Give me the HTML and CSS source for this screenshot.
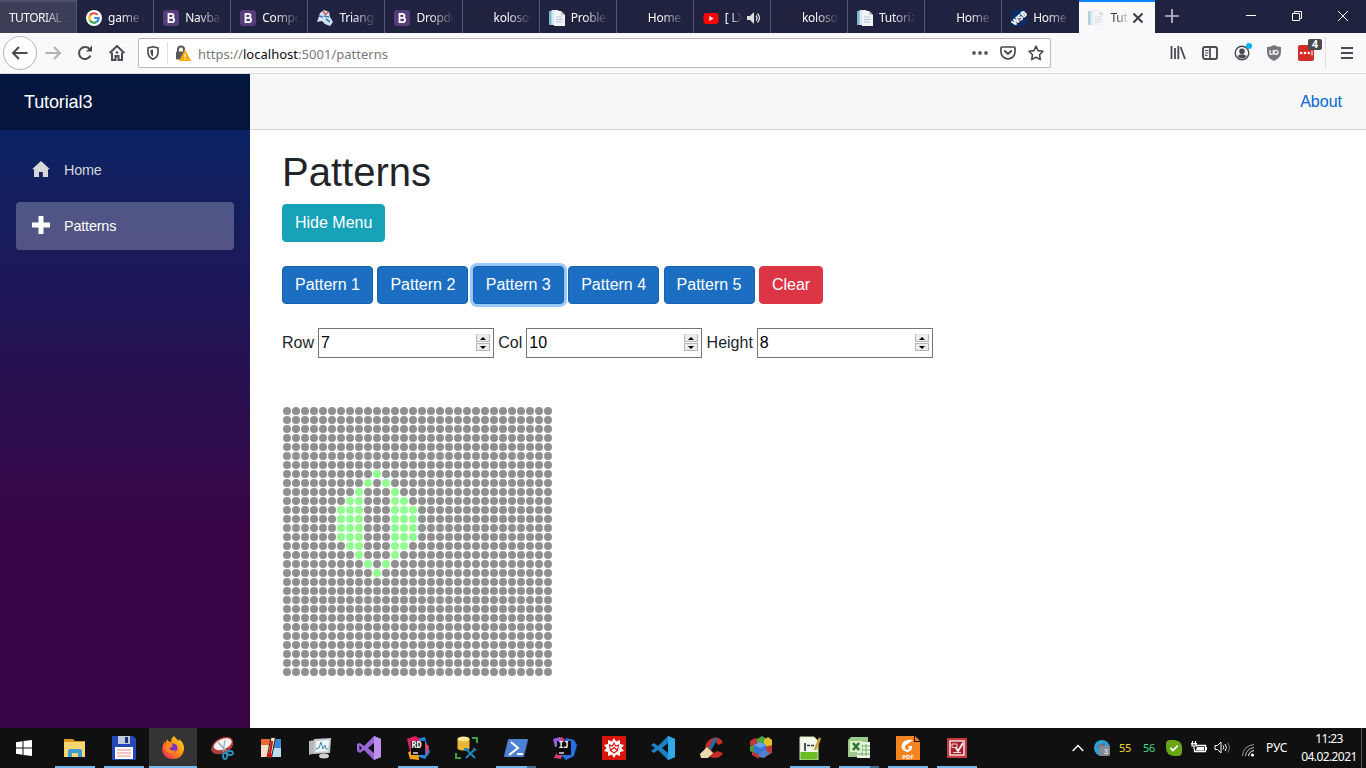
FILE: index.html
```html
<!DOCTYPE html>
<html lang="en">
<head>
<meta charset="utf-8">
<title>Tutorial3</title>
<link rel="stylesheet" href="styles.css">
</head>
<body>
<svg class="defs" width="0" height="0">
  <symbol id="boot" viewBox="0 0 16 16"><rect width="16" height="16" rx="3" fill="#563d7c"/><path d="M5.5 3.8h3a2 2 0 0 1 0 4h-3zM5.5 7.8h3.4a2.2 2.2 0 0 1 0 4.4H5.5z" fill="none" stroke="#fff" stroke-width="1.8"/></symbol>
  <symbol id="doc" viewBox="0 0 16 16"><path d="M0 1h4v14H0z" fill="#7fb6cf"/><path d="M2.5 0h7v15h-7z" fill="#d5e8ef"/><path d="M5 1h7l4 4v11H5z" fill="#f1f3f5"/><path d="M12 1v4h4z" fill="#b9c6ce"/><path d="M7 7h6M7 9.500h7M7 12h6" stroke="#b5c7d2"/></symbol>
  <symbol id="git" viewBox="0 0 16 16"><circle cx="8" cy="8" r="7" fill="#1f2139"/><path d="M5 13v-3Q3 9 4 5l2 1h4l2-1q1 4-1 5v3" fill="#22243f"/></symbol>
</svg>

<header class="tabs">
  <div class="tab hover"><span class="label wide">TUTORIAL 3</span></div>
  <div class="tab"><svg class="fav" viewBox="0 0 16 16"><circle cx="8" cy="8" r="8" fill="#fff"/><g fill="none" stroke-width="2.2"><path d="M4 5.500A4.700 4.700 0 0 1 11.400 4.700" stroke="#ea4335"/><path d="M4 5.500a4.700 4.700 0 0 0 0 5" stroke="#fbbc05"/><path d="M4 10.500a4.700 4.700 0 0 0 7 1.200" stroke="#34a853"/><path d="M11 11.700A4.700 4.700 0 0 0 12.600 8H8.200" stroke="#4285f4"/></g></svg><span class="label">game dev</span></div>
  <div class="tab"><svg class="fav"><use href="#boot"/></svg><span class="label">Navbar</span></div>
  <div class="tab"><svg class="fav"><use href="#boot"/></svg><span class="label">Components</span></div>
  <div class="tab"><svg class="fav" viewBox="0 0 16 16"><path d="M3 3l4-3 5 2 1 5 3 5-3 4-5-2-3-3-5 1 1-3z" fill="#cfe3f1"/><path d="M6 1l2 3M11 2l-3 3" stroke="#d55" stroke-width="1.500"/><path d="M2 6l4 1M9 9l4 3M7 6l5 1" stroke="#3f7fb5" stroke-width="1.600"/></svg><span class="label">Triangle</span></div>
  <div class="tab"><svg class="fav"><use href="#boot"/></svg><span class="label">Dropdowns</span></div>
  <div class="tab"><svg class="fav"><use href="#git"/></svg><span class="label">kolosovp</span></div>
  <div class="tab"><svg class="fav"><use href="#doc"/></svg><span class="label">Problems</span></div>
  <div class="tab"><svg class="fav" viewBox="0 0 16 16"><path d="M1 1h14" stroke="#1d2348"/></svg><span class="label">Home -</span></div>
  <div class="tab"><svg class="fav" viewBox="0 0 16 16"><rect y="3" x=".5" width="15" height="11" rx="3" fill="#f00"/><path d="M6.300 6v5l4.200-2.500z" fill="#fff"/></svg><span class="label short">[ LXST</span><svg class="sound" viewBox="0 0 14 14"><path d="M0 5h3l4-4v12L3 9H0z" fill="#ddd"/><path d="M9 4.500q2 2.500 0 5M10.500 2.500q4 4.500 0 9" fill="none" stroke="#ddd" stroke-width="1.300"/></svg></div>
  <div class="tab"><svg class="fav"><use href="#git"/></svg><span class="label">kolosovp</span></div>
  <div class="tab"><svg class="fav"><use href="#doc"/></svg><span class="label">Tutorials</span></div>
  <div class="tab"><svg class="fav" viewBox="0 0 16 16"><path d="M1 1h14" stroke="#1d2348"/></svg><span class="label">Home -</span></div>
  <div class="tab last"><svg class="fav" viewBox="0 0 16 16"><rect width="16" height="16" rx="2" fill="#0b2b66"/><text x="8" y="11" class="wsb" transform="rotate(-42 8 8)">WSB</text></svg><span class="label">Home -</span></div>
  <div class="tab active"><svg class="fav pale"><use href="#doc"/></svg><span class="label cut">Tutorial3</span><svg class="close" viewBox="0 0 12 12"><path d="M1.500 1.500l9 9M10.500 1.500l-9 9" stroke="#38383d" stroke-width="1.900"/></svg></div>
  <svg class="plus" viewBox="0 0 14 14"><path d="M7 0v14M0 7h14" stroke="#bfc0d0" stroke-width="1.700"/></svg>
  <div class="win">
    <svg viewBox="0 0 12 12"><path d="M1 5.500h10" stroke="#fff"/></svg>
    <svg viewBox="0 0 12 12"><path d="M1.500 3.500h7v7h-7zM3.500 3.500v-2h7v7h-2" fill="none" stroke="#fff"/></svg>
    <svg viewBox="0 0 12 12"><path d="M1 1l10 10M11 1L1 11" stroke="#fff"/></svg>
  </div>
</header>

<nav class="toolbar">
  <span class="back"><svg width="18" height="18" viewBox="0 0 18 18"><path d="M16.500 9H2M8 3L2 9l6 6" class="ln"/></svg></span>
  <svg class="fwd" width="18" height="18" viewBox="0 0 18 18"><path d="M1.500 9H16M10 3l6 6-6 6" class="ln"/></svg>
  <svg class="reload" width="16" height="16" viewBox="0 0 16 16"><path d="M13.500 10.500a6 6 0 1 1-.6-6" class="ln"/><path d="M15 .5v6H9z" fill="#4a4a4f"/></svg>
  <svg class="homeb" width="16" height="16" viewBox="0 0 16 16"><path d="M.7 8L8 1l7.300 7" class="ln"/><path d="M3 7.500V15h3.500v-4h3v4H13V7.500" class="ln"/><circle cx="8" cy="7.500" r="1.300" fill="#4a4a4f"/></svg>
  <div class="url">
    <svg class="shield" width="12" height="14" viewBox="0 0 12 14"><path d="M6 .8l5 1.200v4.500q0 4.500-5 6.700-5-2.200-5-6.700V2z" fill="none" stroke="#4a4a4f" stroke-width="1.600"/><path d="M6 3.500v7q-2.500-1.500-2.500-4V4z" fill="#4a4a4f"/></svg>
    <span class="sep"></span>
    <svg class="lock" width="16" height="16" viewBox="0 0 16 16"><path d="M3 7V4.500a3 3 0 0 1 6 0V7" fill="none" stroke="#5a5a5e" stroke-width="2"/><rect x="1" y="6.500" width="9" height="8" rx="1" fill="#5a5a5e"/><path d="M10 5.500l5.500 10H4.500z" fill="#ffa900" stroke="#ffa900" stroke-linejoin="round"/><path d="M10 9v3.200M10 13.400v1.300" stroke="#fff" stroke-width="1.300"/></svg>
    <span class="addr">https://<b>localhost</b>:5001/patterns</span>
    <svg class="dots3" width="16" height="4" viewBox="0 0 16 4"><g fill="#5a5a5e"><circle cx="2" cy="2" r="1.900"/><circle cx="8" cy="2" r="1.900"/><circle cx="14" cy="2" r="1.900"/></g></svg>
    <svg class="pocket" width="16" height="14" viewBox="0 0 16 14"><path d="M2 1h12q1 0 1 1v4a7 7 0 0 1-14 0V2q0-1 1-1z" fill="none" stroke="#4a4a4f" stroke-width="1.700"/><path d="M4.800 5L8 8l3.200-3" fill="none" stroke="#4a4a4f" stroke-width="1.900" stroke-linecap="round"/></svg>
    <svg class="star" width="16" height="16" viewBox="0 0 16 16"><path d="M8 1.200l2.100 4.400 4.900.7-3.500 3.400.8 4.900L8 12.300l-4.300 2.300.8-4.900L1 6.300l4.900-.7z" fill="none" stroke="#4a4a4f" stroke-width="1.600" stroke-linejoin="round"/></svg>
  </div>
  <div class="tools">
    <svg width="16" height="16" viewBox="0 0 16 16"><path d="M1.500 1v13M5 3v11M8.300 1v13M10.600 2l4.400 12" stroke="#4a4a4f" stroke-width="1.800"/></svg>
    <svg width="16" height="16" viewBox="0 0 16 16"><rect x="1" y="2" width="14" height="12" rx="2" fill="none" stroke="#4a4a4f" stroke-width="1.900"/><path d="M8 2v12" stroke="#4a4a4f" stroke-width="1.700"/><path d="M3 5.500h3.500M3 8h3.500M3 10.500h2.500" stroke="#4a4a4f"/></svg>
    <svg width="18" height="18" viewBox="0 0 18 18"><circle cx="8" cy="10" r="6.800" fill="none" stroke="#4a4a4f" stroke-width="1.400"/><circle cx="8" cy="8.300" r="2.800" fill="#4a4a4f"/><path d="M3.300 13q4.700-3.500 9.400 0-2 2.600-4.700 2.600T3.300 13z" fill="#4a4a4f"/><circle cx="15" cy="3" r="3" fill="#00b3f4"/></svg>
    <svg width="16" height="16" viewBox="0 0 16 16"><path d="M8 0q3 2 7 2v5q0 6-7 9-7-3-7-9V2q4 0 7-2z" fill="#77777b"/><path d="M4 5v3.500q1.700 2 3.300 0V5M7.300 5v4" fill="none" stroke="#fff" stroke-width="1.200"/><circle cx="10" cy="7.300" r="2" fill="none" stroke="#fff" stroke-width="1.200"/></svg>
    <span class="ext"><svg width="16" height="16" viewBox="0 0 16 16"><rect width="16" height="16" rx="2" fill="#d32d27"/><g fill="#fff"><circle cx="3.200" cy="8" r="1.300"/><circle cx="7" cy="8" r="1.300"/><circle cx="10.800" cy="8" r="1.300"/><path d="M13.500 5.500h1v5h-1z"/></g></svg><i class="badge">4</i></span>
    <span class="tsep"></span>
    <svg width="12" height="14" viewBox="0 0 12 14"><path d="M0 2h12M0 7h12M0 12h12" stroke="#4a4a4f" stroke-width="1.900"/></svg>
  </div>
</nav>

<div class="page">
  <aside class="sidebar">
    <div class="brand">Tutorial3</div>
    <a class="item"><svg width="18" height="18" viewBox="0 0 18 18"><path d="M9 1L0 9.300h2V17h5v-5h3.800v5H16V9.300h2z" fill="#d7d7d7"/></svg><span>Home</span></a>
    <a class="item on"><svg width="18" height="18" viewBox="0 0 18 18"><path d="M6.500 0h5v6.500H18v5h-6.500V18h-5v-6.500H0v-5h6.500z" fill="#fff"/></svg><span>Patterns</span></a>
  </aside>
  <main>
    <div class="top"><a>About</a></div>
    <div class="content">
      <h1>Patterns</h1>
      <div class="row"><button class="btn info">Hide Menu</button></div>
      <div class="row"><button class="btn">Pattern 1</button> <button class="btn">Pattern 2</button> <button class="btn focus">Pattern 3</button> <button class="btn">Pattern 4</button> <button class="btn">Pattern 5</button> <button class="btn danger">Clear</button></div>
      <div class="fields">
        <label>Row</label><span class="num"><input value="7"><i class="spin"><b></b><b></b></i></span>
        <label>Col</label><span class="num"><input value="10"><i class="spin"><b></b><b></b></i></span>
        <label>Height</label><span class="num"><input value="8"><i class="spin"><b></b><b></b></i></span>
      </div>
      <svg id="board" width="270" height="270"></svg>
    </div>
  </main>
</div>

<footer class="taskbar">
  <div class="app start"><svg width="16" height="16" viewBox="0 0 16 16"><path d="M0 2.300l6.500-1v6.200H0zM7.500 1.100L16 0v7.500H7.500zM0 8.500h6.500v6.200l-6.500-1zM7.500 8.500H16V16l-8.500-1.100z" fill="#fff"/></svg></div>
  <div class="app run"><svg viewBox="0 0 24 24"><path d="M1 3h9l2 2h10v3H1z" fill="#d99b1c"/><path d="M1 6h21v15H1z" fill="#f9d672"/><path d="M5 21v-6q0-2 2-2h10q2 0 2 2v6h-4v-4H9v4z" fill="#3f9bd4"/></svg></div>
  <div class="app run"><svg viewBox="0 0 24 24"><path d="M0 0h21l3 3v20q0 1-1 1H1q-1 0-1-1z" fill="#2448b8"/><path d="M6 0h12v8H6z" fill="#c4cbd8"/><path d="M13 1h3v6h-3z" fill="#1b327e"/><path d="M3 11h18v12H3z" fill="#fff"/><path d="M5 14h14M5 17h14M5 20h14" stroke="#e98b8b"/></svg></div>
  <div class="app cur"><svg viewBox="0 0 24 24"><defs><linearGradient id="fx" x1="1" y1="0" x2="0" y2="1"><stop offset="0" stop-color="#ffe226"/><stop offset=".5" stop-color="#ff8a16"/><stop offset="1" stop-color="#f5156c"/></linearGradient></defs><path d="M13 0q2 3 5 5V3q6 5 5 11-2 9-11 9T1 14q0-5 3-9v3l2-5q1 3 4 3 0-4 3-6z" fill="url(#fx)"/><circle cx="12" cy="12" r="4.500" fill="#7a35c8"/><path d="M5 8q4-2 7 1-1 3-4 3 2 4 7 2-2 5-7 3t-3-9z" fill="#ff8818"/></svg></div>
  <div class="app"><svg viewBox="0 0 24 24"><ellipse cx="12" cy="10.500" rx="11.500" ry="7" transform="rotate(-22 12 10)" fill="#a8403d"/><ellipse cx="12.500" cy="8.500" rx="11" ry="6.500" transform="rotate(-22 12 8)" fill="#b9332f"/><ellipse cx="12.500" cy="8.500" rx="9.500" ry="5.200" transform="rotate(-22 12 8)" fill="#f1f1f1"/><path d="M8 6l8 9M15 4l-2 12" stroke="#98aab5" stroke-width="1.200"/><g fill="none" stroke="#2a91bd" stroke-width="1.900"><ellipse cx="15" cy="20" rx="2" ry="3"/><ellipse cx="20" cy="17" rx="3" ry="2"/></g></svg></div>
  <div class="app"><svg viewBox="0 0 24 24"><path d="M2 3h9v10H2z" fill="#e96935"/><path d="M2 9h9v12H2z" fill="#f9ddc9"/><path d="M13 3h9v10h-9z" fill="#3f86d0"/><path d="M13 12h9v9h-9z" fill="#bcdcf2"/><path d="M12 1.500h4.500l-4 20H8z" fill="#f3efbd" stroke="#222"/><path d="M13 5l-2 12" stroke="#d21616" stroke-width="2.400"/><circle cx="10.500" cy="19" r="2.500" fill="#d21616"/></svg></div>
  <div class="app"><svg viewBox="0 0 24 24"><path d="M1 5l6-1v13l-6 2z" fill="#b3b7b7"/><path d="M6 3l17-1-1 15-17 1z" fill="#c5caca"/><path d="M8 5l13-1-1 11-12 1z" fill="#eef6fa"/><path d="M8 13l3-1 2-6 2 7 2-4 1 4h2" fill="none" stroke="#418daa"/><ellipse cx="16" cy="20" rx="5" ry="2.500" fill="#cdd0d0"/></svg></div>
  <div class="app"><svg viewBox="0 0 24 24"><path d="M17 0l7 3v18l-7 3L7 14l-4 3-3-2V8l3-1 4 3zM17 7l-6 5 6 5zM2.500 9.500v5L5 12z" fill="#9b65d3" fill-rule="evenodd"/><path d="M17 0l7 3v18l-7 3z" fill="#bc91ed"/></svg></div>
  <div class="app run"><svg viewBox="0 0 24 24"><path d="M1 3l8-3 8 4-6 16H5z" fill="#df1d60"/><path d="M14 2l5-1 2 8 3 7-5 7-9-3z" fill="#2185dc"/><path d="M2 16l10-2 1 10-9-1z" fill="#f4a41c"/><path d="M18 6l5 4-2 10z" fill="#e23e67"/><rect x="5" y="5" width="14" height="14" fill="#0b0b0b"/><text x="5.500" y="12" class="ide">RD</text><path d="M7 17h5" stroke="#fff" stroke-width="1.300"/></svg></div>
  <div class="app"><svg viewBox="0 0 24 24"><path d="M2.500 3v10q5.500 3 12 0V3z" fill="#e9b836"/><ellipse cx="8.500" cy="3" rx="6" ry="2.500" fill="#ffe889"/><path d="M17 2h5v5M1 17v5h5" fill="none" stroke="#3f9d42" stroke-width="2"/><path d="M11 13l9 9M20 13l-9 9" stroke="#2283bd" stroke-width="2"/><path d="M9 12h4v3H9zM18 11l4 3-3 1z" fill="#2283bd"/></svg></div>
  <div class="app run multi"><svg viewBox="0 0 24 24"><path d="M5 3h18q1 0 1 1l-4 16q0 1-1 1H1q-1 0-1-1L4 4q0-1 1-1z" fill="#4b80d3"/><path d="M7 6l7 6-9 7M13 18h6" fill="none" stroke="#fff" stroke-width="2"/></svg></div>
  <div class="app"><svg viewBox="0 0 24 24"><path d="M1 4l8-3 5 5-6 17-7-1 4-8z" fill="#d63c73"/><path d="M13 2l8 2 3 5-3 11-8 4-5-5z" fill="#2372e3"/><path d="M0 3l7-2 2 7-7 3z" fill="#a25bd9"/><rect x="4" y="5" width="14" height="14" fill="#0b0b0b"/><text x="5.500" y="12" class="ide">IJ</text><path d="M6 17h5" stroke="#fff" stroke-width="1.300"/></svg></div>
  <div class="app"><svg viewBox="0 0 24 24"><path d="M0 0h24v24H0z" fill="#d8140b"/><path d="M12 2L14 5.500L18 4L18 8L22 9L19.500 12L22 15L18 16L18 20L14 18.500L12 22L10 18.500L6 20L6 16L2 15L4.500 12L2 9L6 8L6 4L10 5.500z" fill="#fff"/><path d="M7.500 9L10.500 10L12 7L13.500 10L16.500 9L15.500 14.500L12 17L8.500 14.500zM8.500 14.500L12 11.500L15.500 14.500" fill="none" stroke="#d8140b" stroke-width="1.100"/></svg></div>
  <div class="app"><svg viewBox="0 0 24 24"><path d="M17 0l7 3v18l-7 3L7 14l-4 3-3-2 4-3-4-3 3-2 4 3zM17 7l-6 5 6 5z" fill="#1b83c5" fill-rule="evenodd"/><path d="M17 0l7 3v18l-7 3z" fill="#31a7ed"/></svg></div>
  <div class="app"><svg viewBox="0 0 24 24"><path d="M23 7Q20 0 13 2 5 5 5 13q1 8 9 9 7 0 9-5l-6-2q-3 4-6-1-2-6 3-8 3 0 4 3z" fill="#c42e25"/><path d="M16 2l-6 11" stroke="#1f6ca5" stroke-width="3.500"/><path d="M7 11l6 6-5 5H1l-1-4z" fill="#efd9ae"/></svg></div>
  <div class="app"><svg viewBox="0 0 24 24"><path d="M1 5l5-3 6 3v5l-5 2-6-3z" fill="#c33638"/><path d="M8 3l5-3 5 3v5l-5 2-5-3z" fill="#47a941"/><path d="M15 4l4-3 4 3v6l-4 2-4-3z" fill="#e4c02b"/><path d="M1 10l6-1v9l-6-3z" fill="#4a9d3f"/><path d="M3 16l7 2v5l-7-4z" fill="#bd3436"/><path d="M16 11l7-2v8l-7 4z" fill="#c33638"/><path d="M5 9l6-3 6 3v7l-6 3-6-3z" fill="#3976d4"/><path d="M5 9l6 3 6-3-6-3z" fill="#6ba0ea"/><path d="M10 17l6-3 5 3-6 5-5-1z" fill="#4d83cd"/></svg></div>
  <div class="app run"><svg viewBox="0 0 24 24"><path d="M2 1h14l4 4v19H2z" fill="#f5f8ee"/><path d="M2 16h18v8H2z" fill="#6abb24"/><path d="M2 1h14l4 4v19H2z" fill="none" stroke="#d4e8b3"/><path d="M7 7v8M9 9.500h3M13 9.500h3" stroke="#333" stroke-width="1.700"/><path d="M22 2l-5 12" stroke="#c6a336" stroke-width="2.700"/></svg></div>
  <div class="app run multi"><svg viewBox="0 0 24 24"><path d="M4 1h17v20H1V4z" fill="#9cc98a"/><path d="M10 6h13v16H10z" fill="#e9f4e2"/><path d="M15 8v12M19 8v12M10 10h13M10 14h13M10 18h13" stroke="#71a964"/><path d="M3 5h12v11H3z" fill="#dceed0"/><path d="M6 7l6 7M12 7l-6 7" stroke="#2c752d" stroke-width="2.500"/></svg></div>
  <div class="app run"><svg viewBox="0 0 24 24"><path d="M0 0h18v6h6v18H0z" fill="#f4841f"/><path d="M19 0l5 5h-5z" fill="#f4841f"/><path d="M17 4Q8 3 6 8q-2 6 5 8 6-1 5-6h-4q2 3-1 4-4-2-1-5 3-2 7-5z" fill="#fff"/><text x="12" y="22.500" class="pdf">PDF</text></svg></div>
  <div class="app run"><svg viewBox="0 0 24 24"><path d="M2 2h20v20H2z" fill="#c53b43"/><path d="M5 5h14v14H5z" fill="#a3202e" stroke="#f4d5d5" stroke-width="1.600"/><path d="M7 8h5v3.500H7zM8 16.500h8" fill="none" stroke="#f4d5d5"/><path d="M11 12l2 3 5-8" fill="none" stroke="#fff" stroke-width="1.800"/></svg></div>
  <div class="tray">
    <svg class="t1" width="12" height="8" viewBox="0 0 12 8"><path d="M.7 7L6 1.500 11.300 7" fill="none" stroke="#fff" stroke-width="1.400"/></svg>
    <svg class="t2" width="16" height="16" viewBox="0 0 16 16"><circle cx="8" cy="8" r="8" fill="#2ba0d8"/><path d="M3 7l8-3" stroke="#7d6b67" stroke-width="2"/><rect x="5" y="6" width="11" height="10" rx="2" fill="#858b92"/><text x="12" y="14" class="mini">3</text></svg>
    <span class="t3">55</span><span class="t4">56</span>
    <svg class="t5" width="16" height="16" viewBox="0 0 16 16"><path d="M0 4q0-4 4-4h5q7 1 7 8v4q0 4-4 4H8Q0 15 0 8z" fill="#6aa516"/><path d="M4.500 8l2.500 2.500 4.700-5" fill="none" stroke="#fff" stroke-width="1.800"/></svg>
    <svg class="t6" width="16" height="14" viewBox="0 0 16 14"><path d="M5 4.500h9.500v6H3.500V8" fill="none" stroke="#fff" stroke-width="1.300"/><path d="M6 6h7v3.500H5zM15 6h1v3h-1z" fill="#fff"/><path d="M1.500 0v2M4.500 0v2M0 2.500h6M1 3h4v2H1zM3 5v3" fill="none" stroke="#fff" stroke-width="1.200"/></svg>
    <svg class="t7" width="17" height="14" viewBox="0 0 17 14"><path d="M1 4.500h2.500L7 1v11L3.500 8.500H1z" fill="none" stroke="#fff"/><path d="M9 4.500q1.500 2 0 4M11 3q3 3.500 0 7" fill="none" stroke="#fff"/><path d="M13.500 1.500q4 5 0 10" fill="none" stroke="#777"/></svg>
    <svg class="t8" width="13" height="13" viewBox="0 0 13 13"><g fill="none" stroke="#999"><path d="M.5 12Q1 2 12 .5"/><path d="M3.500 12Q4 5 12 3.500" stroke="#bbb"/><path d="M6.500 12Q7 7.500 12 6.500" stroke="#fff"/></g><circle cx="10.500" cy="11" r="1.600" fill="#fff"/></svg>
    <span class="lang">РУС</span>
    <span class="clock">11:23<br>04.02.2021</span>
    <span class="peek"></span>
  </div>
</footer>
<script src="board.js"></script>
</body>
</html>
```
FILE: styles.css
```css
* { box-sizing: border-box; }
body { margin: 0; width: 1366px; height: 768px; overflow: hidden; display: flex; flex-direction: column; background: #fff; font-family: "Liberation Sans", Arial, sans-serif; font-size: 16px; line-height: 1.5; color: #212529; }
svg { display: block; flex: none; }
.defs { position: absolute; }

.tabs { height: 33px; flex: none; display: flex; background: #202340; font: 12px/16px "Noto Sans", sans-serif; color: #f9f9fa; }
.tab { width: 77.1px; flex: none; display: flex; align-items: center; padding: 3px 8px 0 9px; border-right: 1px solid #555872; overflow: hidden; }
.tab.hover { background: #3c3e58; border-top: 2px solid #50526a; padding-top: 1px; }
.tab.last { border-right: 0; width: 77.2px; }
.tab.active { width: 76px; background: #f9f9fb; color: #38383d; border: 0; border-top: 2px solid #0a84ff; padding-top: 1px; }
.fav { width: 16px; height: 16px; margin-right: 6px; }
.pale { opacity: .6; }
.label { flex: 1; min-width: 0; white-space: nowrap; overflow: hidden; letter-spacing: -.25px; -webkit-mask-image: linear-gradient(90deg, #000 35%, transparent); mask-image: linear-gradient(90deg, #000 35%, transparent); }
.label.wide { letter-spacing: -.55px; -webkit-mask-image: linear-gradient(90deg, #000 60%, transparent 98%); mask-image: linear-gradient(90deg, #000 60%, transparent 98%); }
.label.cut { flex: none; width: 19px; }
.label.short { flex: none; width: 17px; }
.sound { width: 14px; height: 14px; margin-left: 5px; }
.close { width: 12px; height: 12px; margin-left: 3px; }
.plus { width: 14px; height: 14px; margin: 9px 0 0 10px; }
.win { display: flex; gap: 34px; margin: 10px 17px 0 auto; }
.win svg { width: 12px; height: 12px; }
.wsb { font: bold 8px "Open Sans", sans-serif; fill: #fff; stroke: #fff; stroke-width: .4px; text-anchor: middle; }

.toolbar { height: 41px; flex: none; display: flex; align-items: center; background: #f9f9fb; border-bottom: 1px solid #dcdce0; padding-left: 3px; }
.ln { fill: none; stroke: #4a4a4f; stroke-width: 2; }
.back { width: 34px; height: 34px; border: 1px solid #b4b4b8; border-radius: 50%; display: grid; place-items: center; background: #fdfdfe; }
.fwd { margin-left: 7px; opacity: .4; }
.reload { margin-left: 15px; }
.homeb { margin-left: 16px; }
.url { width: 913px; height: 30px; margin-left: 13px; border: 1px solid #b9b9bd; border-radius: 2px; background: #fff; display: flex; align-items: center; padding: 0 6px 0 8px; }
.sep { width: 1px; height: 22px; margin: 0 7px 0 8px; background: #ddd; }
.addr { font: 13px/18px "Noto Sans", sans-serif; letter-spacing: .02px; color: #77777b; margin: 1px auto 0 7px; }
.addr b { font-weight: 400; color: #0c0c0d; }
.pocket { margin: 0 12px; }
.tools { flex: 1; display: flex; align-items: center; padding: 0 13px 0 119px; gap: 16px; }
.tools > :nth-child(3) { margin-right: -2px; margin-top: -3px; }
.ext { position: relative; }
.badge { position: absolute; left: 10px; top: -6px; width: 14px; height: 11px; background: #4a4a4f; border-radius: 2px; color: #fff; font: bold 10.500px/11px "Open Sans", sans-serif; text-align: center; }
.tsep { width: 1px; height: 32px; margin: 0 -1px 0 -5px; background: #dcdce0; }

.page { flex: 1; min-height: 0; display: flex; }
.sidebar { width: 250px; background: linear-gradient(180deg, #052767 0%, #3a0647 70%); }
.brand { height: 56px; padding-left: 24px; background: rgba(0,0,0,.4); color: #fff; font-size: 18px; line-height: 57px; letter-spacing: -.12px; margin-bottom: 16px; }
.item { display: flex; align-items: center; height: 48px; margin: 0 16px 8px; padding-left: 16px; gap: 14px; border-radius: 4px; color: #d7d7d7; font-size: 14.400px; letter-spacing: -.18px; }
.item svg { margin-top: -3px; }
.item span { padding-top: 2px; }
.item.on { background: rgba(255,255,255,.25); color: #fff; }
main { flex: 1; }
.top { height: 56px; display: flex; justify-content: flex-end; align-items: center; padding-right: 24px; background: #f7f7f7; border-bottom: 1px solid #d6d5d5; color: #0366d6; }
.content { padding: 17.600px 32px 0; }
h1 { margin: 0 0 8px; font-size: 40px; font-weight: 400; line-height: 48px; }
.row { height: 38px; margin-bottom: 24px; white-space: nowrap; }
.btn { height: 38px; padding: 6px 12px; border: 1px solid #1861ac; border-radius: 4px; background: #1b6ec2; color: #fff; font: 16px/24px "Liberation Sans", Arial, sans-serif; }
.btn.info { background: #17a2b8; border-color: #17a2b8; }
.btn.danger { background: #dc3545; border-color: #dc3545; }
.btn.focus { box-shadow: 0 0 0 3px #99c9fb; }
.fields { display: flex; align-items: center; height: 30px; }
.fields label { margin-right: 4px; }
.num { display: flex; align-items: center; width: 175.700px; height: 30px; margin-right: 4.600px; padding: 0 3px 0 2px; border: 1px solid #767676; background: #fff; }
.num input { flex: 1; min-width: 0; border: 0; padding: 0; outline: 0; background: none; font: 16px "Liberation Sans", Arial, sans-serif; color: #000; }
.spin { width: 14px; height: 17px; display: flex; flex-direction: column; gap: 1px; }
.spin b { flex: 1; display: grid; place-items: center; background: #ececec; border: 1px solid #b5b5b5; border-top-color: #e4e4e4; }
.spin b + b { border-top-color: #b5b5b5; }
.spin b::before { content: ""; border: 3px solid transparent; border-top: 0; border-bottom: 3px solid #000; }
.spin b + b::before { transform: rotate(180deg); }
#board { margin-top: 48px; }

.taskbar { height: 40px; flex: none; display: flex; gap: 1px; background: #101010; }
.app { width: 48px; display: flex; justify-content: center; align-items: center; border-bottom: 2px solid transparent; padding-top: 2px; position: relative; }
.app.start { margin-right: 2px; }
.app svg { width: 24px; height: 24px; }
.app.start svg { width: 16px; height: 16px; }
.app.cur { background: #343434; border-bottom-color: #76b9ed; }
.app.run { background: linear-gradient(#76b9ed, #76b9ed) 4px 38px / 40px 2px no-repeat border-box; }
.app.multi::after { content: ""; position: absolute; right: 4px; bottom: -2px; width: 9px; height: 2px; background: #416d91; }
.ide { font: bold 8.500px "DejaVu Sans Mono", monospace; fill: #fff; }
.pdf { font: bold 6px "Open Sans", sans-serif; fill: #fff; text-anchor: middle; }
.mini { font: 7px "Liberation Sans", sans-serif; fill: #fff; text-anchor: middle; }
.tray { margin-left: auto; display: flex; align-items: center; color: #fff; font: 12px/18px "Noto Sans", sans-serif; }
.t2 { margin-left: 10px; }
.t3, .t4 { width: 14px; text-align: center; font-size: 11px; letter-spacing: -.4px; margin-left: 8px; color: #f5d633; }
.t4 { margin-left: 10px; color: #3edd88; }
.t5 { margin-left: 10px; }
.t6 { margin-left: 9px; }
.t7 { margin-left: 7px; }
.t8 { margin: 4px 0 0 11px; }
.lang { width: 24px; margin-left: 11px; letter-spacing: -.1px; white-space: nowrap; }
.clock { width: 60px; margin-left: 9px; text-align: center; letter-spacing: -.6px; white-space: nowrap; }
.peek { width: 1px; height: 40px; margin: 0 4px 0 2px; background: #555; }
```
FILE: board.js
```js
// Columns lit on each row of the 30x30 board.
const outer = [6, 7, 8, 12, 13, 14];
const lit = {
  7: [10], 8: [9, 11], 9: [8, 12], 10: [7, 8, 12, 13],
  11: outer, 12: outer, 13: outer, 14: outer,
  15: [7, 8, 12, 13], 16: [8, 12], 17: [9, 11], 18: [10]
};
const board = document.getElementById("board");
for (let r = 0; r < 30; r++) {
  for (let c = 0; c < 30; c++) {
    const dot = document.createElementNS("http://www.w3.org/2000/svg", "circle");
    dot.setAttribute("cx", c * 9 + 5);
    dot.setAttribute("cy", r * 9 + 5);
    dot.setAttribute("r", 4);
    dot.setAttribute("fill", (lit[r] || []).includes(c) ? "#90ff90" : "#909090");
    board.appendChild(dot);
  }
}
```
